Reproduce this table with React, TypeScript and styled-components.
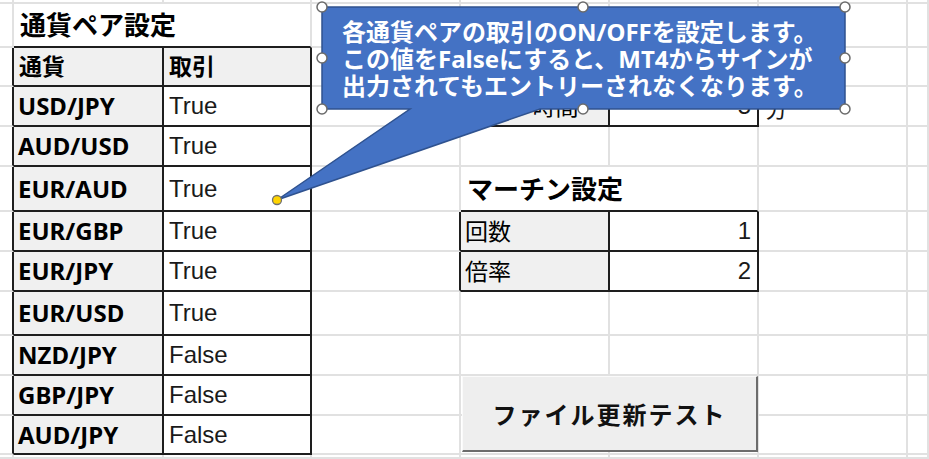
import React from 'react';
import styled, { createGlobalStyle, css } from 'styled-components';

const GlobalStyle = createGlobalStyle`
  html, body { margin: 0; padding: 0; background: #ffffff; }
  body { font-family: "Noto Sans", "Noto Sans CJK JP", sans-serif; }
  * { box-sizing: border-box; }
`;

const GRID = '#E1E1E1';
const LINE = '#1E1E1E';
const SHADE = '#F0F0F0';

const COL_WIDTHS = [14, 150, 148, 149, 149, 149, 149];
const ROW_HEIGHTS = [4, 44, 39, 40, 40, 45, 40, 40, 44, 40, 40, 39];

type Kind = 'blank' | 'title' | 'head' | 'label' | 'key' | 'value' | 'num' | 'unit';

interface CellDef {
  text: string;
  kind: Kind;
  span?: number;
}

const Page = styled.div`
  position: relative;
  width: 929px;
  height: 459px;
  overflow: hidden;
  background: #ffffff;
`;

const Sheet = styled.div`
  display: grid;
  grid-template-columns: ${COL_WIDTHS.map((w) => `${w}px`).join(' ')} 1fr;
  grid-template-rows: ${ROW_HEIGHTS.map((h) => `${h}px`).join(' ')} 1fr;
  width: 929px;
  height: 459px;
`;

const kindStyles: Record<Kind, ReturnType<typeof css>> = {
  blank: css``,
  title: css`
    font-size: 26px;
    font-weight: 700;
    padding-left: 6px;
    color: #000;
  `,
  head: css`
    font-size: 23px;
    font-weight: 700;
    padding-left: 5px;
    color: #000;
  `,
  label: css`
    font-size: 24px;
    font-weight: 700;
    padding-left: 4px;
    color: #000;
  `,
  key: css`
    font-size: 23px;
    font-weight: 400;
    padding-left: 4px;
    color: #000;
  `,
  value: css`
    font-family: "Liberation Sans", "Noto Sans CJK JP", sans-serif;
    font-size: 24px;
    font-weight: 400;
    padding-left: 5px;
    color: #1a1a1a;
  `,
  num: css`
    font-family: "Liberation Sans", "Noto Sans CJK JP", sans-serif;
    font-size: 24px;
    font-weight: 400;
    padding-right: 6px;
    justify-content: flex-end;
    color: #1a1a1a;
  `,
  unit: css`
    font-size: 23px;
    font-weight: 400;
    padding-left: 6px;
    padding-top: 4px;
    color: #1a1a1a;
  `,
};

const Cell = styled.div<{
  $row: number;
  $col: number;
  $span: number;
  $right: string;
  $bottom: string;
  $fill: string;
  $kind: Kind;
}>`
  grid-row: ${(p) => p.$row + 1};
  grid-column: ${(p) => p.$col + 1} / span ${(p) => p.$span};
  border-right: 2px solid ${(p) => p.$right};
  border-bottom: 2px solid ${(p) => p.$bottom};
  background: ${(p) => p.$fill};
  display: flex;
  align-items: center;
  justify-content: flex-start;
  white-space: nowrap;
  min-width: 0;
  line-height: 1;
  ${(p) => kindStyles[p.$kind]}
`;

const UpdateButton = styled.button`
  grid-row: 11 / span 2;
  grid-column: 5 / span 2;
  margin: 0 1px 3px 1px;
  position: relative;
  z-index: 1;
  background: #eeeeee;
  border: none;
  border-top: 1px solid #fafafa;
  border-left: 1px solid #fafafa;
  border-right: 2px solid #6c6c6c;
  border-bottom: 2px solid #6c6c6c;
  font-family: "Noto Sans CJK JP", sans-serif;
  font-size: 24px;
  font-weight: 700;
  letter-spacing: 2px;
  color: #111;
  padding: 0;
`;

const Overlay = styled.svg`
  position: absolute;
  left: 0;
  top: 0;
  width: 929px;
  height: 459px;
  pointer-events: none;
  z-index: 2;
`;

const CalloutText = styled.div`
  position: absolute;
  left: 322px;
  top: 7px;
  width: 523px;
  height: 102px;
  padding: 11px 0 0 20px;
  color: #ffffff;
  font-family: "Noto Sans", "Noto Sans CJK JP", sans-serif;
  font-size: 24px;
  font-weight: 700;
  line-height: 27px;
  white-space: nowrap;
  z-index: 3;
`;

const cells: Record<string, CellDef> = {};
const put = (r: number, c: number, def: CellDef) => {
  cells[`${r},${c}`] = def;
};

put(1, 1, { text: '通貨ペア設定', kind: 'title', span: 2 });
put(2, 1, { text: '通貨', kind: 'head' });
put(2, 2, { text: '取引', kind: 'head' });

const pairs: [string, string][] = [
  ['USD/JPY', 'True'],
  ['AUD/USD', 'True'],
  ['EUR/AUD', 'True'],
  ['EUR/GBP', 'True'],
  ['EUR/JPY', 'True'],
  ['EUR/USD', 'True'],
  ['NZD/JPY', 'False'],
  ['GBP/JPY', 'False'],
  ['AUD/JPY', 'False'],
];
pairs.forEach(([p, v], i) => {
  put(3 + i, 1, { text: p, kind: 'label' });
  put(3 + i, 2, { text: v, kind: 'value' });
});

put(2, 4, { text: '時間設定', kind: 'title', span: 2 });
put(3, 4, { text: 'ループ時間', kind: 'key' });
put(3, 5, { text: '5', kind: 'num' });
put(3, 6, { text: '分', kind: 'unit' });

put(5, 4, { text: 'マーチン設定', kind: 'title', span: 2 });
put(6, 4, { text: '回数', kind: 'key' });
put(6, 5, { text: '1', kind: 'num' });
put(7, 4, { text: '倍率', kind: 'key' });
put(7, 5, { text: '2', kind: 'num' });

const boxedSet = new Set<string>();
for (let r = 2; r <= 11; r++) {
  boxedSet.add(`${r},1`);
  boxedSet.add(`${r},2`);
}
boxedSet.add('3,4');
boxedSet.add('3,5');
for (let r = 6; r <= 7; r++) {
  boxedSet.add(`${r},4`);
  boxedSet.add(`${r},5`);
}
const boxed = (r: number, c: number) => boxedSet.has(`${r},${c}`);

const shaded = (def: CellDef | undefined) =>
  !!def && (def.kind === 'head' || def.kind === 'label' || def.kind === 'key');

const NROWS = ROW_HEIGHTS.length + 1;
const NCOLS = COL_WIDTHS.length + 1;

const handles: [number, number][] = [
  [322, 7],
  [583, 7],
  [845, 7],
  [322, 58],
  [845, 58],
  [322, 109],
  [583, 109],
  [845, 109],
];

export default function App() {
  const rendered: React.ReactNode[] = [];
  for (let r = 0; r < NROWS; r++) {
    let c = 0;
    while (c < NCOLS) {
      const def = cells[`${r},${c}`];
      const span = def?.span ?? 1;
      const last = c + span - 1;
      const right = boxed(r, last) || boxed(r, last + 1) ? LINE : GRID;
      let bottomBlack = false;
      for (let k = c; k <= last; k++) {
        if (boxed(r, k) || boxed(r + 1, k)) bottomBlack = true;
      }
      rendered.push(
        <Cell
          key={`${r}-${c}`}
          $row={r}
          $col={c}
          $span={span}
          $right={right}
          $bottom={bottomBlack ? LINE : GRID}
          $fill={shaded(def) ? SHADE : '#ffffff'}
          $kind={def?.kind ?? 'blank'}
        >
          {def?.text}
        </Cell>
      );
      c += span;
    }
  }

  return (
    <Page>
      <GlobalStyle />
      <Sheet>
        {rendered}
        <UpdateButton type="button">ファイル更新テスト</UpdateButton>
      </Sheet>
      <Overlay viewBox="0 0 929 459">
        <path
          d="M322 7 H845 V109 H540 L277 200 L410 109 H322 Z"
          fill="#4472C4"
          stroke="#2F528F"
          strokeWidth="1.5"
          strokeLinejoin="miter"
        />
        {handles.map(([x, y]) => (
          <circle key={`${x}-${y}`} cx={x} cy={y} r={5} fill="#ffffff" stroke="#6b6b6b" strokeWidth={1.5} />
        ))}
        <circle cx={277} cy={200} r={4.5} fill="#FFD400" stroke="#707070" strokeWidth={1.3} />
      </Overlay>
      <CalloutText>
        各通貨ペアの取引のON/OFFを設定します。
        <br />
        この値をFalseにすると、MT4からサインが
        <br />
        出力されてもエントリーされなくなります。
      </CalloutText>
    </Page>
  );
}
